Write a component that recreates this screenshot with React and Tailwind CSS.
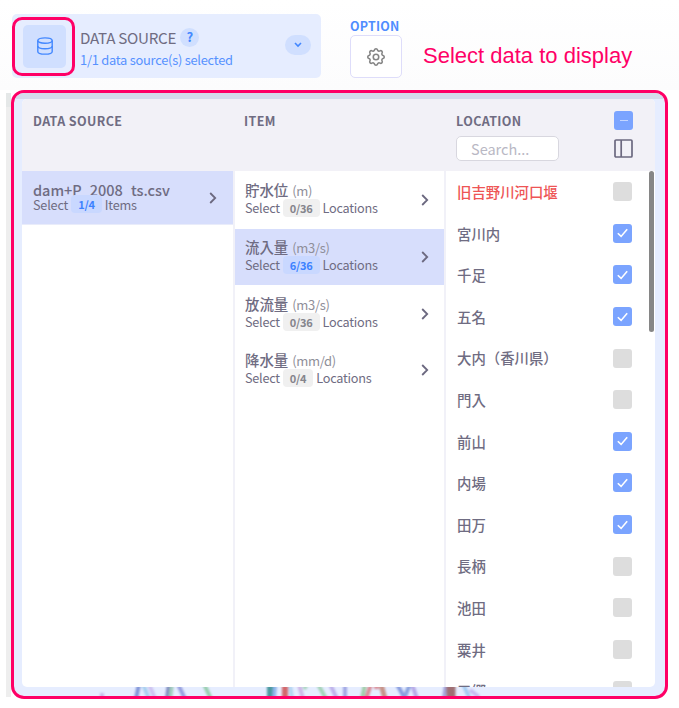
import React, { useState } from 'react';
import clsx from 'clsx';

const ITEMS = [
  { name: '貯水位', unit: '(m)', count: '0/36' },
  { name: '流入量', unit: '(m3/s)', count: '6/36' },
  { name: '放流量', unit: '(m3/s)', count: '0/36' },
  { name: '降水量', unit: '(mm/d)', count: '0/4' },
];

const LOCATIONS = [
  '旧吉野川河口堰',
  '宮川内',
  '千足',
  '五名',
  '大内（香川県）',
  '門入',
  '前山',
  '内場',
  '田万',
  '長柄',
  '池田',
  '粟井',
  '五郷',
];

const DatabaseIcon = () => (
  <svg width="18" height="18" viewBox="0 0 18 18" fill="none" stroke="#4388ff" strokeWidth="1.4">
    <ellipse cx="9" cy="3.6" rx="7.2" ry="2.7" />
    <path d="M1.8 3.6v10.8c0 1.5 3.2 2.7 7.2 2.7s7.2-1.2 7.2-2.7V3.6" />
    <path d="M1.8 9c0 1.5 3.2 2.7 7.2 2.7s7.2-1.2 7.2-2.7" />
  </svg>
);

const GearIcon = () => (
  <svg width="22" height="22" viewBox="0 0 24 24" fill="none" stroke="#858585" strokeWidth="1.7" strokeLinejoin="round">
    <circle cx="12" cy="12" r="3" />
    <path d="M10.33 4.32c.42-1.76 2.92-1.76 3.34 0a1.72 1.72 0 0 0 2.58 1.06c1.54-.94 3.3.83 2.37 2.37a1.72 1.72 0 0 0 1.06 2.58c1.76.42 1.76 2.92 0 3.34a1.72 1.72 0 0 0-1.06 2.58c.94 1.54-.83 3.3-2.37 2.37a1.72 1.72 0 0 0-2.58 1.06c-.42 1.76-2.92 1.76-3.34 0a1.72 1.72 0 0 0-2.58-1.06c-1.54.94-3.3-.83-2.37-2.37a1.72 1.72 0 0 0-1.06-2.58c-1.76-.42-1.76-2.92 0-3.34a1.72 1.72 0 0 0 1.06-2.58c-.94-1.54.83-3.3 2.37-2.37 1 .6 2.3.07 2.58-1.06z" />
  </svg>
);

const ColumnsIcon = () => (
  <svg width="19" height="19" viewBox="0 0 19 19" fill="none" stroke="#6c6980" strokeWidth="1.7">
    <rect x="1" y="1" width="17" height="17" rx="1" />
    <path d="M7.2 1v17" />
  </svg>
);

const Chevron = () => (
  <svg width="8" height="12" viewBox="0 0 8 12" fill="none" stroke="#6c6980" strokeWidth="1.8" className="shrink-0">
    <path d="M1.2 1l5 5-5 5" />
  </svg>
);

const Checkbox = ({ checked, onClick }) => (
  <button
    type="button"
    onClick={onClick}
    className={clsx('flex size-[19px] shrink-0 items-center justify-center rounded-[3px]', checked ? 'bg-[#7ba4ff]' : 'bg-[#dddddd]')}
  >
    {checked && (
      <svg width="11" height="10" viewBox="0 0 11 10" fill="none" stroke="#fff" strokeWidth="1.6">
        <path d="M0.8 5.2l3.3 3.2L10.2 1.2" />
      </svg>
    )}
  </button>
);

const Count = ({ active, children }) => (
  <span
    className={clsx(
      'ml-[3px] mr-[3px] flex h-[18px] items-center rounded-[4px] px-[7px] text-[11px] font-bold leading-3',
      active ? 'bg-[#c9d8ff] text-[#3d82ff]' : 'bg-[#f0f0f0] text-[#85858c]'
    )}
  >
    {children}
  </span>
);

// blurred chart peeking out under the panel
const ChartBackdrop = () => (
  <svg width="651" height="9" viewBox="14 687 651 9" className="block" fill="none" strokeWidth="4" opacity="0.75">
    <g className="blur-[1px]">
      <path d="M139 684l-3 15" stroke="#5d75c9" />
      <path d="M143 684l6 15" stroke="#93c5ea" />
      <path d="M149 684l6 15" stroke="#c5b4ec" />
      <path d="M169 684l-2 15" stroke="#5b68a8" />
      <path d="M172 684l-2 15" stroke="#8bc1a8" />
      <path d="M178 684l7 15" stroke="#7a83d4" />
      <path d="M204 684l7 15" stroke="#7cc492" />
      <path d="M270 684v15" stroke="#187d80" strokeWidth="6" />
      <path d="M275 684l-1 15" stroke="#74a4e5" />
      <path d="M285 684v15" stroke="#cc3d3d" strokeWidth="6" />
      <path d="M290 684l2 15" stroke="#a4cdec" />
      <path d="M299 684l4 15" stroke="#c5a4df" />
      <path d="M307 684l-3 5" stroke="#91cda4" />
      <path d="M318 684l8 15" stroke="#8dcaa0" />
      <path d="M330 684l7 15" stroke="#af9be3" />
      <path d="M345 684v15" stroke="#8c91db" />
      <path d="M365 684l-3 15" stroke="#8ac48d" />
      <path d="M371 684l-5 15" stroke="#d76d73" />
      <path d="M374 687h5" stroke="#d76d73" />
      <path d="M381 684l4 15" stroke="#bd7460" strokeWidth="5" />
      <path d="M397 684l8 15" stroke="#667fd2" />
      <path d="M410 684l-6 15" stroke="#6a88d2" />
      <path d="M412 684l5 15" stroke="#a692df" />
      <path d="M446 684l-2 15" stroke="#8d8bce" />
      <path d="M451 684v15" stroke="#884646" strokeWidth="9" />
      <path d="M463 684l7 15" stroke="#8ec0ed" />
      <path d="M470 690l9 7" stroke="#bba8eb" />
      <path d="M102 699v-6" stroke="#bba8e2" />
    </g>
  </svg>
);

export default function App() {
  const [item, setItem] = useState(1);
  const [checked, setChecked] = useState([1, 2, 3, 6, 7, 8]);

  const toggle = (i) => setChecked((c) => (c.includes(i) ? c.filter((n) => n !== i) : [...c, i]));

  return (
    <div
      className="relative h-[708px] w-[679px] overflow-hidden bg-white text-[#6f6c82]"
      style={{ fontFamily: '"Noto Sans CJK JP", sans-serif' }}
    >
      <header className="flex h-[90px] bg-linear-to-b from-white to-[#fcfcfd] pl-3 pt-[14px]">
        <div className="relative flex h-16 w-[309px] items-center rounded-[5px] bg-[#e6edff] pl-[11px] pr-[10px]">
          <div className="flex size-[43px] items-center justify-center rounded-[5px] bg-[#d0dfff]">
            <DatabaseIcon />
          </div>
          <div className="absolute left-0 top-[3px] h-[59px] w-[63px] rounded-[10px] border-3 border-[#ff0066]" />
          <div className="ml-[14px] flex-1 pt-[4px]">
            <div className="flex h-[21px] items-center text-[15.2px] tracking-[-0.28px]">
              <span>DATA SOURCE</span>
              <span className="ml-[4px] flex size-[19px] items-center justify-center rounded-full bg-[#d0dfff] text-[13px] font-bold text-[#4388ff]">?</span>
            </div>
            <div className="h-[22px] text-[12.9px] leading-[23px] tracking-[-0.26px] text-[#5792ff]">1/1 data source(s) selected</div>
          </div>
          <button type="button" className="-mt-[2px] flex h-5 w-[26px] items-center justify-center rounded-full bg-[#d0dfff]">
            <svg width="8" height="6" viewBox="0 0 8 6" fill="none" stroke="#4388ff" strokeWidth="1.6">
              <path d="M1 1l3 3 3-3" />
            </svg>
          </button>
        </div>

        <div className="ml-[29px] pt-1">
          <div className="h-[17px] text-[12.4px] font-bold leading-[17px] tracking-[0.2px] text-[#4f8dff]">OPTION</div>
          <button type="button" className="flex h-[43px] w-[52px] items-center justify-center rounded-[5px] border border-[#deddfa] bg-white">
            <GearIcon />
          </button>
        </div>
        <div className="ml-[21px] pt-[28px] font-['Liberation_Sans'] text-[22px] leading-7 text-[#ff0066]">Select data to display</div>
      </header>

      <div className="flex pl-[6px]">
        <div className="mt-[3px] h-[604px] w-[5px] border-t-[14px] border-[#e5e8e8] bg-[#eeeeee]" />
        <div className="h-[609px] w-[657px] overflow-hidden rounded-[13px] border-3 border-[#ff0066] bg-[#e6edff]">
          <div className="h-[6px] bg-[#d5dcec]" />
          <main className="ml-[8px] h-[588px] w-[633px] overflow-hidden rounded-[5px] bg-white">
            <div className="flex h-[72px] bg-[#f2f1f7] text-[12.5px] font-bold leading-[18px] tracking-[0.38px]">
              <div className="w-[212px] pl-[11px] pt-[13px]">DATA SOURCE</div>
              <div className="w-[211px] pl-[10px] pt-[13px]">ITEM</div>
              <div className="flex flex-1 justify-between pl-[11px] pr-[22px] pt-[13px]">
                <div>
                  <div>LOCATION</div>
                  <input
                    placeholder="Search..."
                    className="mt-[6px] block h-[25px] w-[103px] rounded-[5px] border border-[#d8d7df] bg-white pl-[14px] text-[14.5px] font-normal tracking-normal outline-none placeholder:text-[#b9b8c4]"
                  />
                </div>
                <div className="-mt-px flex flex-col gap-[9px]">
                  <div className="flex size-[19px] items-center justify-center rounded-[3px] bg-[#7ba4ff]">
                    <div className="h-[1.5px] w-2 bg-[#c4d6ff]" />
                  </div>
                  <ColumnsIcon />
                </div>
              </div>
            </div>

            <div className="flex h-[516px]">
              <section className="w-[211px]">
                <div className="flex h-[54px] items-center justify-between border-b border-[#e9ecfa] bg-[#d7defc] pl-[11px] pr-[16px]">
                  <div className="-mt-[3px]">
                    {/* fixed row height trims the descenders */}
                    <div className="h-4 overflow-hidden whitespace-pre text-[14.5px] font-medium leading-[18px] tracking-[-0.02px]">dam+P_2008_ts.csv</div>
                    <div className="flex h-[15px] items-center text-[12.7px] leading-[15px] tracking-[-0.2px]">
                      Select
                      <Count active>1/4</Count>
                      Items
                    </div>
                  </div>
                  <Chevron />
                </div>
              </section>

              <section className="w-[213px] border-x-2 border-[#f1f1f8]">
                {ITEMS.map((it, i) => (
                  <div
                    key={it.name}
                    onClick={() => setItem(i)}
                    className={clsx('flex items-center justify-between pl-[10px] pr-[15px] first:h-[57.7px]', i === item ? 'h-[56.7px] bg-[#d7defc]' : 'h-[56.7px]')}
                  >
                    <div className="pb-[2px]">
                      <div className="h-[18px] text-[14.4px] font-medium leading-[17px]">
                        {it.name}
                        <span className="ml-1 text-[13px] font-normal tracking-[-0.3px] text-[#8f8f99]">{it.unit}</span>
                      </div>
                      <div className="flex h-[18px] items-center text-[12.7px] leading-[18px] tracking-[-0.25px]">
                        Select
                        <Count active={i === item}>{it.count}</Count>
                        Locations
                      </div>
                    </div>
                    <Chevron />
                  </div>
                ))}
              </section>

              <section className="h-[516px] flex-1 overflow-hidden">
                {LOCATIONS.map((loc, i) => (
                  <div key={loc} className="flex h-[41.6px] items-center justify-between pl-[11px] pr-[17px]">
                    <span className={clsx('pt-[0.5px] text-[14.4px] font-medium leading-5', i === 0 && 'text-[#ee5555]')}>{loc}</span>
                    <Checkbox checked={checked.includes(i)} onClick={() => toggle(i)} />
                  </div>
                ))}
              </section>
              <div className="mr-px h-[161px] w-[5px] rounded-full bg-[#868686]" />
            </div>
          </main>
          <ChartBackdrop />
        </div>
      </div>
    </div>
  );
}
